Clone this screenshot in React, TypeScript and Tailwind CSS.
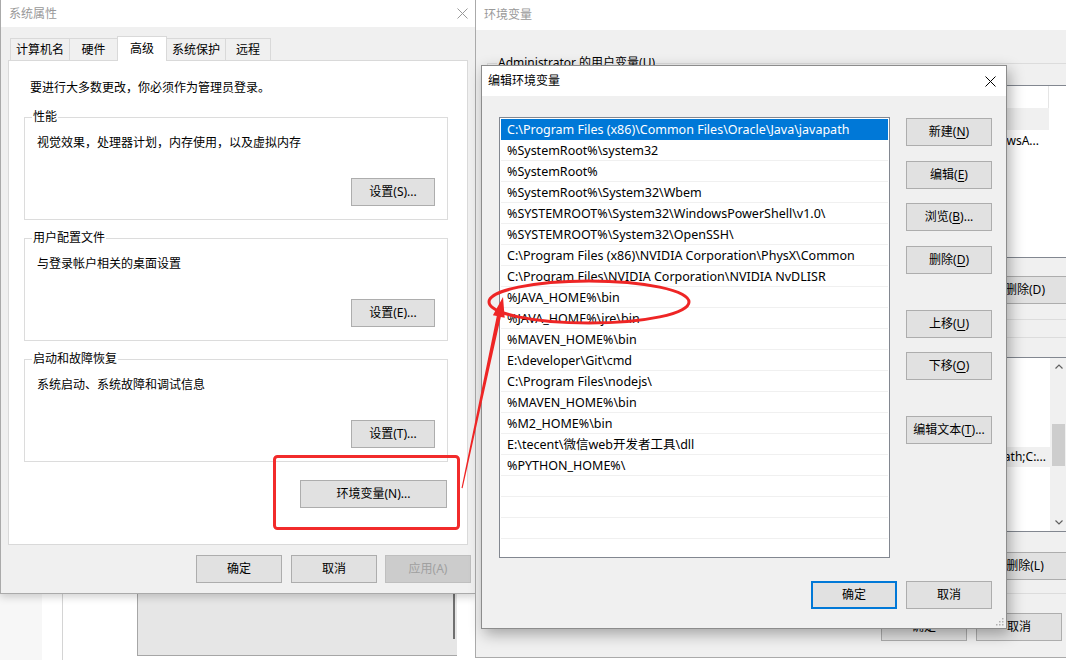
import React from 'react';

const font = "font-['Noto_Sans','Noto_Sans_CJK_SC',sans-serif]";

type BtnProps = {
    children: React.ReactNode;
    w?: string;
    variant?: 'normal' | 'default' | 'disabled';
};

function WinButton({ children, w = 'w-[86px]', variant = 'normal' }: BtnProps) {
    const look =
        variant === 'disabled'
            ? 'bg-[#cccccc] border border-[#bfbfbf] text-[#a0a0a0]'
            : variant === 'default'
            ? 'bg-[#e1e1e1] border-2 border-[#0078d7] text-black'
            : 'bg-[#e1e1e1] border border-[#adadad] text-black';
    return (
        <div className={`${w} h-[28px] shrink-0 flex items-center justify-center text-[12px] leading-[16px] whitespace-nowrap ${look}`}>
            {children}
        </div>
    );
}

// button caption with one underlined access key, e.g. 新建(N)
function Caption({ pre, k, post = '' }: { pre: string; k: string; post?: string }) {
    return (
        <span>
            {pre}(<span className="underline underline-offset-[2px]">{k}</span>){post}
        </span>
    );
}

function CloseX({ stroke }: { stroke: string }) {
    return (
        <svg width="11" height="11" viewBox="0 0 11 11">
            <path d="M0.5 0.5L10.5 10.5M10.5 0.5L0.5 10.5" stroke={stroke} strokeWidth="1" fill="none" />
        </svg>
    );
}

function Group({ title, desc, button }: { title: string; desc: string; button: string }) {
    return (
        <div className="ml-[15px] w-[424px] border border-[#dcdcdc] flex flex-col pb-[13px]">
            <div className="-mt-[9px] ml-[7px] self-start bg-white px-[1px] text-[12px] leading-[16px]">{title}</div>
            <div className="mt-[10px] pl-[12px] text-[12px] leading-[16px]">{desc}</div>
            <div className="mt-[27px] flex justify-end pr-[12px]">
                <WinButton w="w-[84px]">{button}</WinButton>
            </div>
        </div>
    );
}

const paths = [
    'C:\\Program Files (x86)\\Common Files\\Oracle\\Java\\javapath',
    '%SystemRoot%\\system32',
    '%SystemRoot%',
    '%SystemRoot%\\System32\\Wbem',
    '%SYSTEMROOT%\\System32\\WindowsPowerShell\\v1.0\\',
    '%SYSTEMROOT%\\System32\\OpenSSH\\',
    'C:\\Program Files (x86)\\NVIDIA Corporation\\PhysX\\Common',
    'C:\\Program Files\\NVIDIA Corporation\\NVIDIA NvDLISR',
    '%JAVA_HOME%\\bin',
    '%JAVA_HOME%\\jre\\bin',
    '%MAVEN_HOME%\\bin',
    'E:\\developer\\Git\\cmd',
    'C:\\Program Files\\nodejs\\',
    '%MAVEN_HOME%\\bin',
    '%M2_HOME%\\bin',
    'E:\\tecent\\微信web开发者工具\\dll',
    '%PYTHON_HOME%\\',
    '',
    '',
    '',
];

function SystemProperties() {
    return (
        <div className="absolute left-0 top-0 w-[476px] h-[594px] flex flex-col bg-[#f0f0f0] border-l border-b border-[#aaaaaa] shadow-[0_3px_8px_rgba(0,0,0,0.18)]">
            <div className="h-[27px] shrink-0 bg-white flex items-center justify-between pl-[8px] pr-[8px]">
                <span className="text-[12px] leading-[16px] text-[#999999]">系统属性</span>
                <CloseX stroke="#999999" />
            </div>

            {/* tabs */}
            <div className="flex items-end h-[24px] mt-[9px] ml-[9px] text-[12px] leading-[16px]">
                <div className="w-[59px] h-[22px] flex items-center justify-center border-t border-l border-[#d9d9d9]">计算机名</div>
                <div className="w-[48px] h-[22px] flex items-center justify-center border-t border-l border-[#d9d9d9]">硬件</div>
                <div className="relative z-10 w-[50px] h-[25px] -mb-[1px] flex items-center justify-center bg-white border-t border-x border-[#d9d9d9]">高级</div>
                <div className="w-[58px] h-[22px] flex items-center justify-center border-t border-[#d9d9d9]">系统保护</div>
                <div className="w-[46px] h-[22px] flex items-center justify-center border-t border-x border-[#d9d9d9]">远程</div>
            </div>

            <div className="ml-[7px] w-[460px] h-[485px] bg-white border border-[#d9d9d9] flex flex-col">
                <div className="pt-[19px] pl-[21px] text-[12px] leading-[16px]">要进行大多数更改，你必须作为管理员登录。</div>
                <div className="mt-[21px]">
                    <Group title="性能" desc="视觉效果，处理器计划，内存使用，以及虚拟内存" button="设置(S)..." />
                </div>
                <div className="mt-[18px]">
                    <Group title="用户配置文件" desc="与登录帐户相关的桌面设置" button="设置(E)..." />
                </div>
                <div className="mt-[18px]">
                    <Group title="启动和故障恢复" desc="系统启动、系统故障和调试信息" button="设置(T)..." />
                </div>
                <div className="mt-[18px] ml-[15px] w-[424px] flex justify-end pr-[1px]">
                    <WinButton w="w-[147px]">环境变量(N)...</WinButton>
                </div>
            </div>

            <div className="flex justify-end mt-[10px] pr-[5px]">
                <WinButton>确定</WinButton>
                <div className="ml-[9px]">
                    <WinButton>取消</WinButton>
                </div>
                <div className="ml-[8px]">
                    <WinButton variant="disabled">应用(A)</WinButton>
                </div>
            </div>
        </div>
    );
}

function EnvironmentVariables() {
    return (
        <div className="absolute left-[475px] top-0 w-[640px] h-[658px] flex flex-col bg-[#f0f0f0] border-l border-b border-[#aaaaaa]">
            <div className="h-[30px] shrink-0 bg-white flex items-center pl-[8px] text-[12px] leading-[16px] text-[#999999]">环境变量</div>

            {/* user variables */}
            <div className="mt-[33px] ml-[11px] w-[592px] border border-[#dcdcdc] flex flex-col pb-[15px]">
                <div className="-mt-[9px] ml-[9px] self-start bg-[#f0f0f0] px-[1px] text-[12px] leading-[16px]">Administrator 的用户变量(U)</div>
                <div className="mt-[14px] ml-[10px] w-[570px] h-[173px] bg-white border border-[#828790] flex flex-col text-[12px] leading-[16px]">
                    <div className="h-[22px] w-[550px] flex">
                        <div className="w-[150px] border-r border-[#e5e5e5]" />
                        <div className="flex-1 border-r border-[#e5e5e5]" />
                    </div>
                    <div className="h-[22px] w-[550px] bg-[#f0f0f0]" />
                    <div className="h-[22px] w-[550px] flex items-center justify-end pr-[10px] overflow-hidden whitespace-nowrap">
                        WindowsA...
                    </div>
                </div>
                <div className="mt-[18px] ml-[10px] w-[570px] flex justify-end">
                    <WinButton>删除(D)</WinButton>
                </div>
            </div>

            {/* system variables (label sits behind the edit dialog) */}
            <div className="mt-[17px] ml-[11px] w-[592px] border border-[#dcdcdc] flex flex-col pb-[13px]">
                <div className="mt-[19px] ml-[10px] w-[570px] h-[175px] bg-white border border-[#828790] flex text-[12px] leading-[16px]">
                    <div className="flex-1 flex flex-col pt-[89px] overflow-hidden">
                        <div className="h-[20px] bg-[#f0f0f0] flex items-center justify-end pr-[4px] whitespace-nowrap">
                            javapath;C:...
                        </div>
                    </div>
                    <div className="w-[17px] bg-[#f0f0f0] flex flex-col">
                        <div className="h-[17px] flex items-center justify-center">
                            <svg width="8" height="5" viewBox="0 0 8 5">
                                <path d="M0.5 4.5L4 1L7.5 4.5" stroke="#606060" strokeWidth="1.2" fill="none" />
                            </svg>
                        </div>
                        <div className="flex-1 flex flex-col">
                            <div className="mt-[49px] mx-[2px] h-[42px] bg-[#cdcdcd]" />
                        </div>
                        <div className="h-[17px] flex items-center justify-center">
                            <svg width="8" height="5" viewBox="0 0 8 5">
                                <path d="M0.5 0.5L4 4L7.5 0.5" stroke="#606060" strokeWidth="1.2" fill="none" />
                            </svg>
                        </div>
                    </div>
                </div>
                <div className="mt-[20px] ml-[10px] w-[570px] flex justify-end">
                    <WinButton>删除(L)</WinButton>
                </div>
            </div>

            <div className="mt-[19px] flex justify-end gap-[9px] pr-[53px]">
                <WinButton>确定</WinButton>
                <WinButton>取消</WinButton>
            </div>
        </div>
    );
}

function EditDialog() {
    return (
        <div className="absolute left-[481px] top-[65px] w-[526px] h-[564px] flex flex-col bg-[#f0f0f0] border border-[#8c8c8c] shadow-[3px_5px_14px_rgba(0,0,0,0.32)]">
            <div className="h-[30px] shrink-0 bg-white flex items-center justify-between pl-[6px] pr-[10px]">
                <span className="text-[12px] leading-[16px] text-black">编辑环境变量</span>
                <CloseX stroke="#000000" />
            </div>

            <div className="flex pt-[21px] pl-[17px] gap-[16px]">
                <div className="w-[391px] h-[441px] bg-white border border-[#828790] flex flex-col px-[1px] pt-[1px] overflow-hidden text-[12.5px] leading-[16px]">
                    {paths.map((p, i) => (
                        <div
                            key={i}
                            className={`h-[21px] shrink-0 flex items-center pt-[2px] pl-[6px] whitespace-nowrap border-b ${
                                i === 0 ? 'bg-[#0078d7] text-white border-[#0078d7]' : 'text-black border-[#f0f0f0]'
                            }`}
                        >
                            {p}
                        </div>
                    ))}
                </div>

                <div className="flex flex-col pt-[1px]">
                    <WinButton><Caption pre="新建" k="N" /></WinButton>
                    <div className="mt-[15px]"><WinButton><Caption pre="编辑" k="E" /></WinButton></div>
                    <div className="mt-[14px]"><WinButton><Caption pre="浏览" k="B" post="..." /></WinButton></div>
                    <div className="mt-[15px]"><WinButton><Caption pre="删除" k="D" /></WinButton></div>
                    <div className="mt-[36px]"><WinButton><Caption pre="上移" k="U" /></WinButton></div>
                    <div className="mt-[14px]"><WinButton><Caption pre="下移" k="O" /></WinButton></div>
                    <div className="mt-[36px]"><WinButton><Caption pre="编辑文本" k="T" post="..." /></WinButton></div>
                </div>
            </div>

            <div className="mt-[23px] flex justify-end gap-[9px] pr-[14px]">
                <WinButton variant="default">确定</WinButton>
                <WinButton>取消</WinButton>
            </div>

            {/* resize grip */}
            <svg className="absolute right-[2px] bottom-[2px]" width="9" height="9" viewBox="0 0 9 9">
                <rect x="7" y="1" width="1.5" height="1.5" fill="#b0b0b0" />
                <rect x="4" y="4" width="1.5" height="1.5" fill="#b0b0b0" />
                <rect x="7" y="4" width="1.5" height="1.5" fill="#b0b0b0" />
                <rect x="1" y="7" width="1.5" height="1.5" fill="#b0b0b0" />
                <rect x="4" y="7" width="1.5" height="1.5" fill="#b0b0b0" />
                <rect x="7" y="7" width="1.5" height="1.5" fill="#b0b0b0" />
            </svg>
        </div>
    );
}

function Annotations() {
    return (
        <svg className="absolute left-0 top-0 pointer-events-none" width="1066" height="660" viewBox="0 0 1066 660">
            <rect x="274.5" y="456.5" width="184" height="72" rx="3" fill="none" stroke="#f22b2b" strokeWidth="3" />
            <ellipse cx="589" cy="302" rx="100" ry="21" fill="none" stroke="#ee2525" strokeWidth="3" />
            <polygon
                points="461.5,488 496.8,316.1 492.9,315.2 503,297 504.7,317.8 500.8,316.9 462.6,488.2"
                fill="#ee2525"
            />
        </svg>
    );
}

export default function App() {
    return (
        <div className={`relative w-[1066px] h-[660px] overflow-hidden bg-white text-black ${font}`}>
            {/* windows further back */}
            <div className="absolute left-0 top-[560px] w-[42px] h-[100px] bg-[#f7f7f7]" />
            <div className="absolute left-[62px] top-[560px] w-px h-[100px] bg-[#d4d4d4]" />
            <div className="absolute left-[137px] top-[560px] w-[320px] h-[96px] bg-[#e6e6e6] border-l border-b border-[#a6a6a6] flex justify-end">
                <div className="w-[2px] h-[79px] mr-[2px] bg-[#707070]" />
            </div>

            <SystemProperties />
            <EnvironmentVariables />
            <EditDialog />
            <Annotations />
        </div>
    );
}
